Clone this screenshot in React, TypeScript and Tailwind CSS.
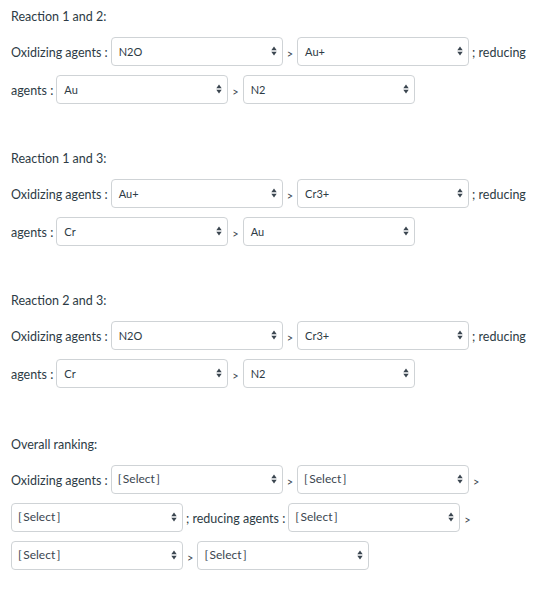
import React from "react";

const Arrows = () => (
  <svg width="6" height="10" viewBox="0 0 6 10" className="shrink-0">
    <path d="M3 0.5 L5.7 4.2 L0.3 4.2 Z" fill="#3b4650" />
    <path d="M3 9.5 L5.7 5.8 L0.3 5.8 Z" fill="#3b4650" />
  </svg>
);

const Sel = ({ value }: { value: string }) => {
  const placeholder = value.startsWith("[");
  return (
    <div className="inline-flex items-center justify-between w-[172px] h-[29px] rounded-[4px] border border-[#cfd3d6] bg-white pl-[6px] pr-[5px] shrink-0">
      <span
        className={
          placeholder
            ? "text-[12px] text-[#3b4650] leading-none"
            : "text-[11px] text-[#2d3b45] leading-none pl-[1px]"
        }
      >
        {value}
      </span>
      <Arrows />
    </div>
  );
};

const Gt = () => <span className="text-[11px] text-[#3b4650] mx-[4px] mt-[7px]">&gt;</span>;

const Row = ({ children }: { children: React.ReactNode }) => (
  <div className="flex items-center h-[38px] whitespace-nowrap">{children}</div>
);

const Label = ({ children }: { children: React.ReactNode }) => (
  <span className="text-[12.5px] text-[#2d3b45] mr-[3px] mt-[5px]">{children}</span>
);

const Heading = ({ children }: { children: React.ReactNode }) => (
  <div className="h-[20px] flex items-center text-[12.5px] text-[#2d3b45] mb-[5px]">{children}</div>
);

const SEL = "[\u2009Select\u2009]";

const Pair = ({
  title,
  a,
  b,
  c,
  d,
}: {
  title: string;
  a: string;
  b: string;
  c: string;
  d: string;
}) => (
  <div className="mb-[41px]">
    <Heading>{title}</Heading>
    <Row>
      <Label>Oxidizing agents :</Label>
      <Sel value={a} />
      <Gt />
      <Sel value={b} />
      <span className="text-[12.5px] text-[#2d3b45] ml-[3px] mt-[5px]">; reducing</span>
    </Row>
    <Row>
      <Label>agents :</Label>
      <Sel value={c} />
      <Gt />
      <Sel value={d} />
    </Row>
  </div>
);

export default function App() {
  return (
    <div
      className="w-[560px] h-[594px] bg-white px-[11px] pt-[7px] overflow-hidden"
      style={{ fontFamily: "Lato, 'Liberation Sans', sans-serif" }}
    >
      <Pair title="Reaction 1 and 2:" a="N2O" b="Au+" c="Au" d="N2" />
      <Pair title="Reaction 1 and 3:" a="Au+" b="Cr3+" c="Cr" d="Au" />
      <Pair title="Reaction 2 and 3:" a="N2O" b="Cr3+" c="Cr" d="N2" />
      <div className="pt-[2px]">
        <Heading>Overall ranking:</Heading>
        <Row>
          <Label>Oxidizing agents :</Label>
          <Sel value={SEL} />
          <Gt />
          <Sel value={SEL} />
          <Gt />
        </Row>
        <Row>
          <Sel value={SEL} />
          <span className="text-[12.5px] text-[#2d3b45] ml-[3px] mr-[3px] mt-[5px]">; reducing agents :</span>
          <Sel value={SEL} />
          <Gt />
        </Row>
        <Row>
          <Sel value={SEL} />
          <Gt />
          <Sel value={SEL} />
        </Row>
      </div>
    </div>
  );
}
